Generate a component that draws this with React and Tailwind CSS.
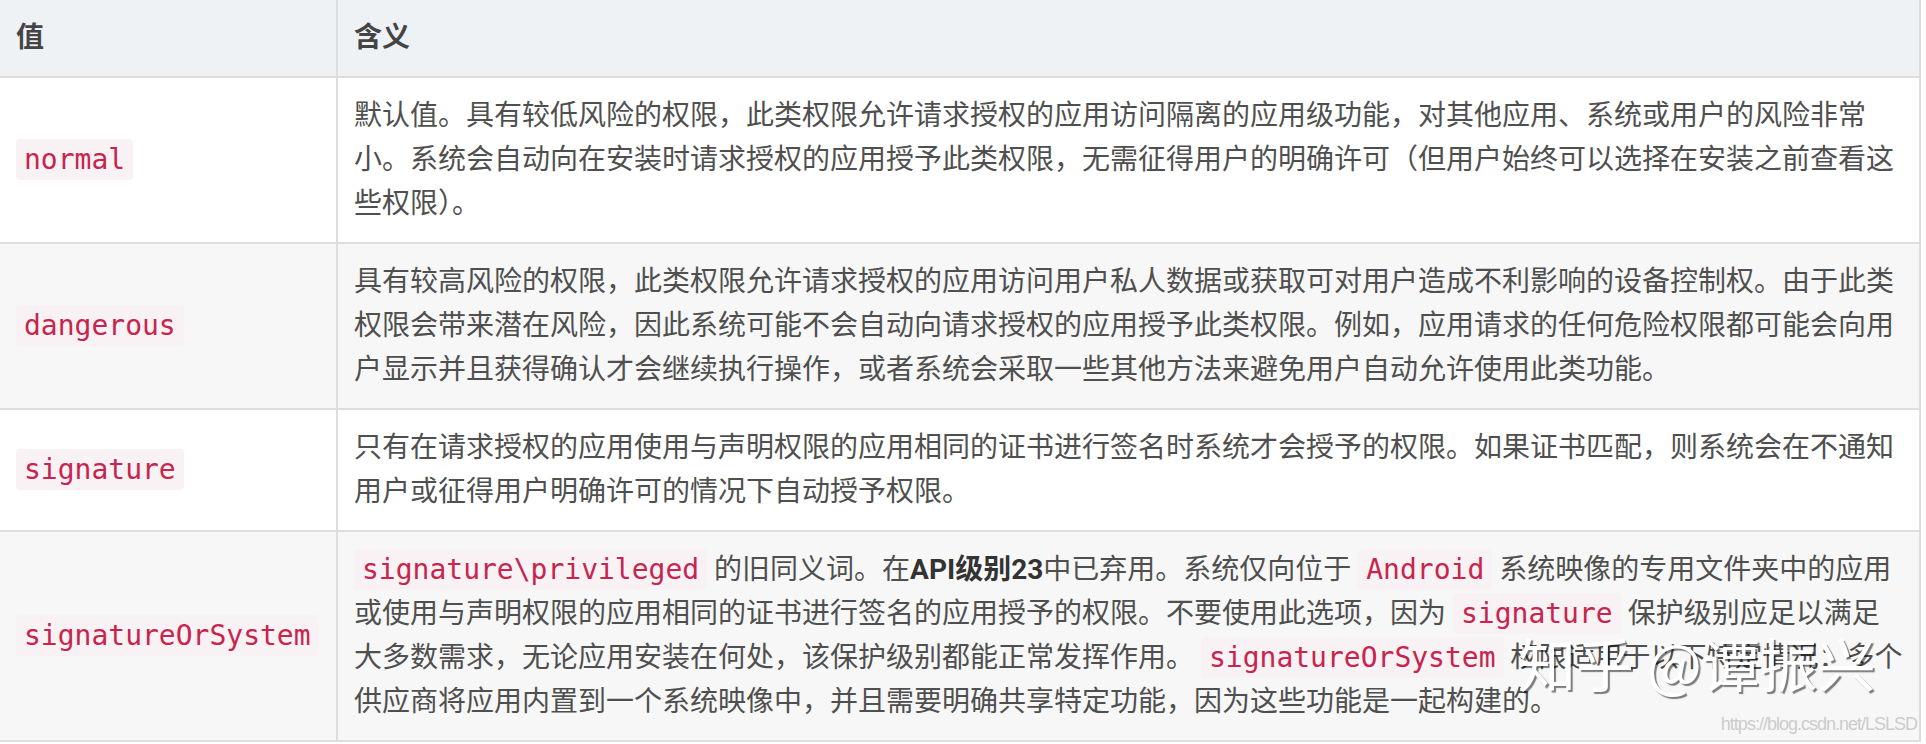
import React from 'react';

const codeCls =
    "rounded-[4px] bg-[#f9f2f4] px-2 py-1 font-['DejaVu_Sans_Mono',monospace] text-[28px] text-[#c7254e]";

const rows = [
    {
        value: 'normal',
        meaning: (
            <>
                默认值。具有较低风险的权限，此类权限允许请求授权的应用访问隔离的应用级功能，对其他应用、系统或用户的风险非常小。系统会自动向在安装时请求授权的应用授予此类权限，无需征得用户的明确许可（但用户始终可以选择在安装之前查看这些权限）。
            </>
        ),
    },
    {
        value: 'dangerous',
        meaning: (
            <>
                具有较高风险的权限，此类权限允许请求授权的应用访问用户私人数据或获取可对用户造成不利影响的设备控制权。由于此类权限会带来潜在风险，因此系统可能不会自动向请求授权的应用授予此类权限。例如，应用请求的任何危险权限都可能会向用户显示并且获得确认才会继续执行操作，或者系统会采取一些其他方法来避免用户自动允许使用此类功能。
            </>
        ),
    },
    {
        value: 'signature',
        meaning: (
            <>
                只有在请求授权的应用使用与声明权限的应用相同的证书进行签名时系统才会授予的权限。如果证书匹配，则系统会在不通知用户或征得用户明确许可的情况下自动授予权限。
            </>
        ),
    },
    {
        value: 'signatureOrSystem',
        meaning: (
            <>
                <code className={codeCls}>signature\privileged</code> 的旧同义词。在
                <b className="font-bold text-[#333]">API级别23</b>
                中已弃用。系统仅向位于 <code className={codeCls}>Android</code> 系统映像的专用文件夹中的应用或使用与声明权限的应用相同的证书进行签名的应用授予的权限。不要使用此选项，因为{' '}
                <code className={codeCls}>signature</code> 保护级别应足以满足大多数需求，无论应用安装在何处，该保护级别都能正常发挥作用。{' '}
                <code className={codeCls}>signatureOrSystem</code> 权限适用于以下特定情况：多个供应商将应用内置到一个系统映像中，并且需要明确共享特定功能，因为这些功能是一起构建的。
            </>
        ),
    },
];

export default function App() {
    return (
        <div className="relative h-[744px] w-[1926px] overflow-hidden bg-white font-['Roboto','Noto_Sans_CJK_SC',sans-serif] text-[28px] leading-[44px] text-[#4f4f4f]">
            <table className="w-[1921px] table-fixed border-separate border-spacing-0">
                <thead>
                    <tr className="bg-[#eff2f5]">
                        <th className="w-[338px] border-r-2 border-b-2 border-[#dddddd] px-4 py-4 text-left font-bold text-[#444444]">
                            值
                        </th>
                        <th className="border-r-2 border-b-2 border-[#dddddd] py-4 pr-3 pl-4 text-left font-bold text-[#444444]">
                            含义
                        </th>
                    </tr>
                </thead>
                <tbody>
                    {rows.map((row, i) => (
                        <tr key={row.value} className={i % 2 === 1 ? 'bg-[#f7f7f7]' : 'bg-white'}>
                            <td className="border-r-2 border-b-2 border-[#dddddd] px-4 py-4 align-middle">
                                <code className={codeCls}>{row.value}</code>
                            </td>
                            <td className="border-r-2 border-b-2 border-[#dddddd] py-4 pr-3 pl-4 align-middle">
                                {row.meaning}
                            </td>
                        </tr>
                    ))}
                </tbody>
            </table>

            {/* watermarks from the source screenshot */}
            <div className="pointer-events-none absolute top-[624px] left-[1518px] font-['Noto_Sans_CJK_SC',sans-serif] text-[58px] leading-[76px] text-white [text-shadow:2px_2px_1px_rgba(0,0,0,0.5)]">
                知乎 @谭振兴
            </div>
            <div className="pointer-events-none absolute top-[712px] right-[9px] font-['Liberation_Sans',sans-serif] text-[18px] leading-[24px] tracking-[-1px] text-[#cccccc]">
                https://blog.csdn.net/LSLSD
            </div>
        </div>
    );
}
